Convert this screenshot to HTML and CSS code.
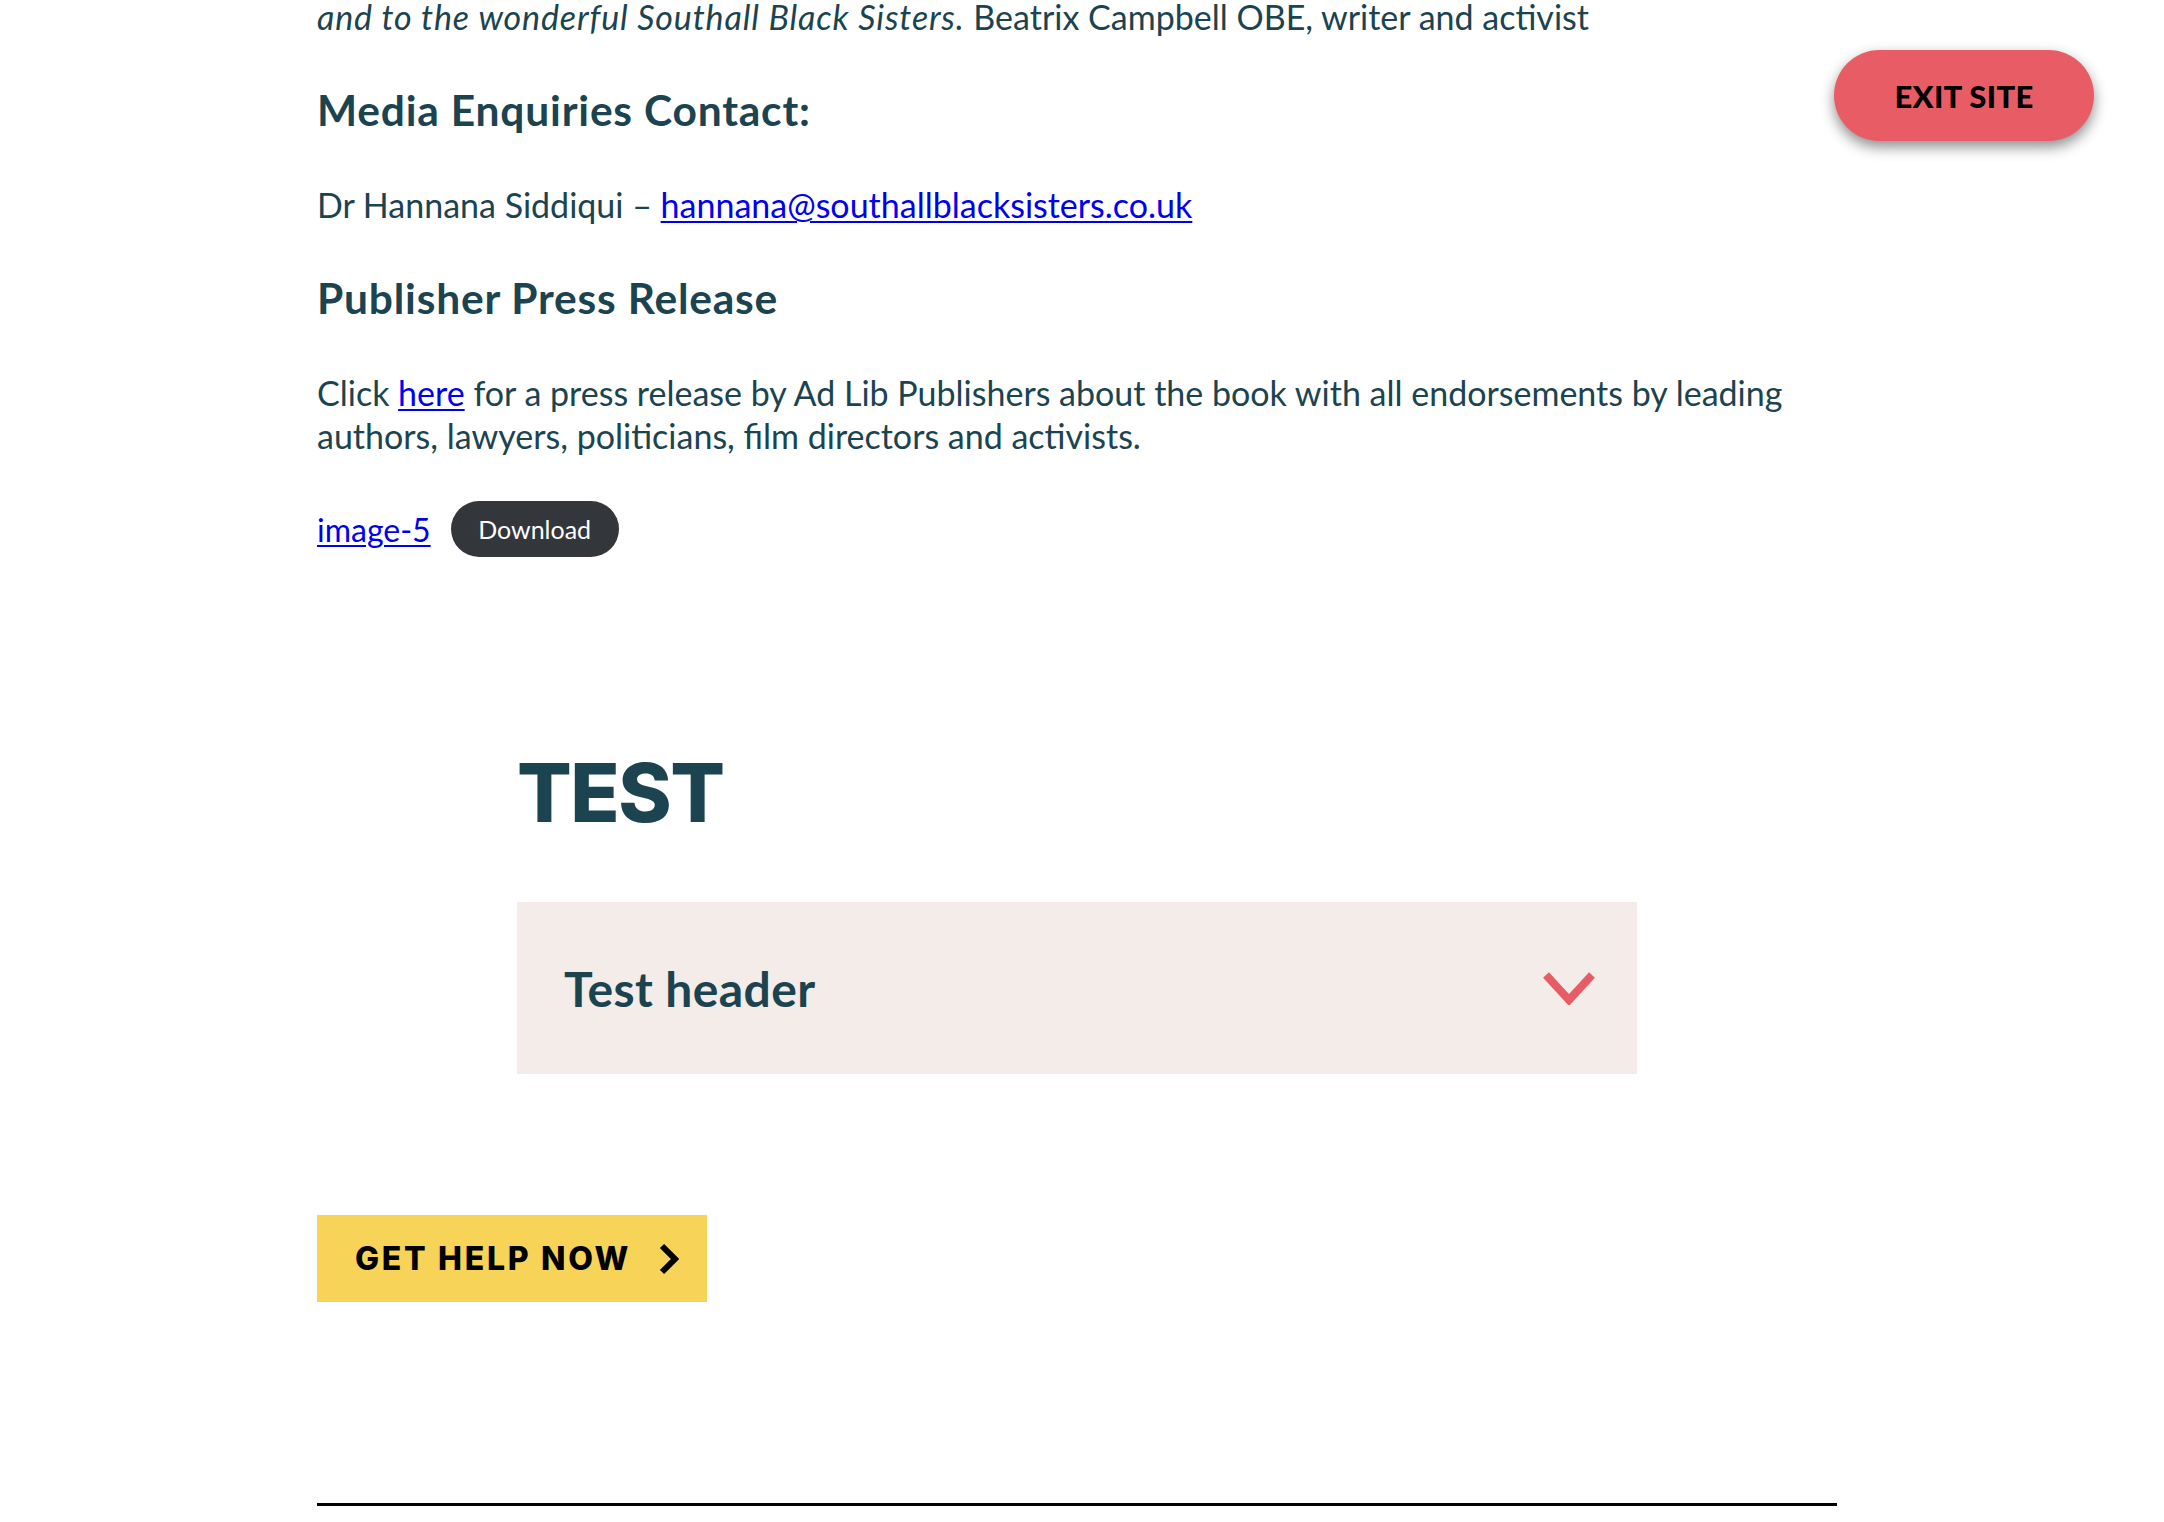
FILE: index.html
```html
<!DOCTYPE html>
<html lang="en">
<head>
<meta charset="utf-8">
<title>Southall Black Sisters</title>
<link rel="stylesheet" href="styles.css">
</head>
<body>
<main class="content">
  <p class="para first"><em class="quote-end">and to the wonderful Southall Black Sisters.</em> Beatrix Campbell OBE, writer and activist</p>
  <h3 class="subhead">Media Enquiries Contact:</h3>
  <p class="para">Dr Hannana Siddiqui – <a href="#">hannana@southallblacksisters.co.uk</a></p>
  <h3 class="subhead">Publisher Press Release</h3>
  <p class="para">Click <a href="#">here</a> for a press release by Ad Lib Publishers about the book with all endorsements by leading authors, lawyers, politicians, film directors and activists.</p>
  <div class="file-row">
    <a href="#" class="file-link">image-5</a>
    <a href="#" class="download-btn">Download</a>
  </div>

  <section class="test-block">
    <h2 class="test-title">TEST</h2>
    <div class="accordion">
      <span class="accordion-title">Test header</span>
      <svg class="accordion-icon" width="52" height="33" viewBox="0 0 52 33"><polyline points="3,3 26,28 49,3" fill="none" stroke="#e85d65" stroke-width="8"/></svg>
    </div>
  </section>

  <a href="#" class="help-btn">GET HELP NOW
    <svg class="help-icon" width="20" height="32" viewBox="0 0 20 32"><polyline points="3,3 16,16 3,29" fill="none" stroke="#000" stroke-width="6"/></svg>
  </a>

  <hr class="rule">
</main>
<a href="#" class="exit-btn">EXIT SITE</a>
</body>
</html>
```

FILE: styles.css
```css
html, body {
  margin: 0;
  padding: 0;
  background: #ffffff;
}
body {
  font-family: "Lato", "Liberation Sans", sans-serif;
  color: #1b4350;
  overflow: hidden;
  height: 1522px;
}
.content {
  margin-left: 317px;
  width: 1520px;
  display: flex;
  flex-direction: column;
  align-items: flex-start;
}
.para {
  font-size: 34px;
  line-height: 43px;
  margin: 0;
}
.para a {
  color: #0000ee;
  text-decoration: underline;
  text-underline-offset: 3px;
  text-decoration-thickness: 2px;
}
.first {
  margin-top: -5px;
}
.quote-end {
  letter-spacing: 0.85px;
}
.subhead {
  font-size: 42.5px;
  font-weight: 700;
  line-height: 50px;
  margin: 47px 0 48px;
  letter-spacing: 0.8px;
}
.file-row {
  display: flex;
  align-items: center;
  gap: 20px;
  margin-top: 44px;
}
.file-link {
  font-size: 32px;
  color: #0000ee;
  text-decoration: underline;
  text-decoration-thickness: 2px;
  text-underline-offset: 3px;
}
.download-btn {
  display: inline-flex;
  align-items: center;
  justify-content: center;
  height: 56px;
  width: 168px;
  border-radius: 28px;
  background: #33363a;
  color: #ffffff;
  text-decoration: none;
  font-size: 25px;
}
.test-block {
  align-self: center;
  width: 1120px;
  margin-top: 186px;
}
.test-title {
  font-family: "Inter", "Liberation Sans", sans-serif;
  font-weight: 800;
  font-size: 81px;
  line-height: 100px;
  margin: 0 0 59px;
  letter-spacing: -1.5px;
  color: #1b4350;
}
.accordion {
  background: #f4ece9;
  height: 172px;
  display: flex;
  align-items: center;
  justify-content: space-between;
  padding: 0 42px 0 47px;
  box-sizing: border-box;
}
.accordion-title {
  font-size: 48px;
  font-weight: 700;
  letter-spacing: 0.4px;
}
.help-btn {
  margin-top: 141px;
  display: flex;
  align-items: center;
  gap: 28px;
  height: 87px;
  width: 390px;
  box-sizing: border-box;
  padding-left: 38px;
  background: #f7d358;
  color: #000000;
  text-decoration: none;
  font-family: "Inter", "Liberation Sans", sans-serif;
  font-weight: 800;
  font-size: 32px;
  letter-spacing: 2.7px;
}
.rule {
  margin: 201px 0 0;
  width: 1520px;
  border: 0;
  border-top: 3px solid #000;
  height: 0;
}
.exit-btn {
  position: absolute;
  top: 50px;
  left: 1834px;
  width: 260px;
  height: 91px;
  border-radius: 46px;
  background: #e85c66;
  color: #000;
  text-decoration: none;
  display: flex;
  align-items: center;
  justify-content: center;
  font-size: 31px;
  font-weight: 900;
  letter-spacing: 0.3px;
  box-shadow: 0 6px 14px rgba(0,0,0,0.45);
}
```
